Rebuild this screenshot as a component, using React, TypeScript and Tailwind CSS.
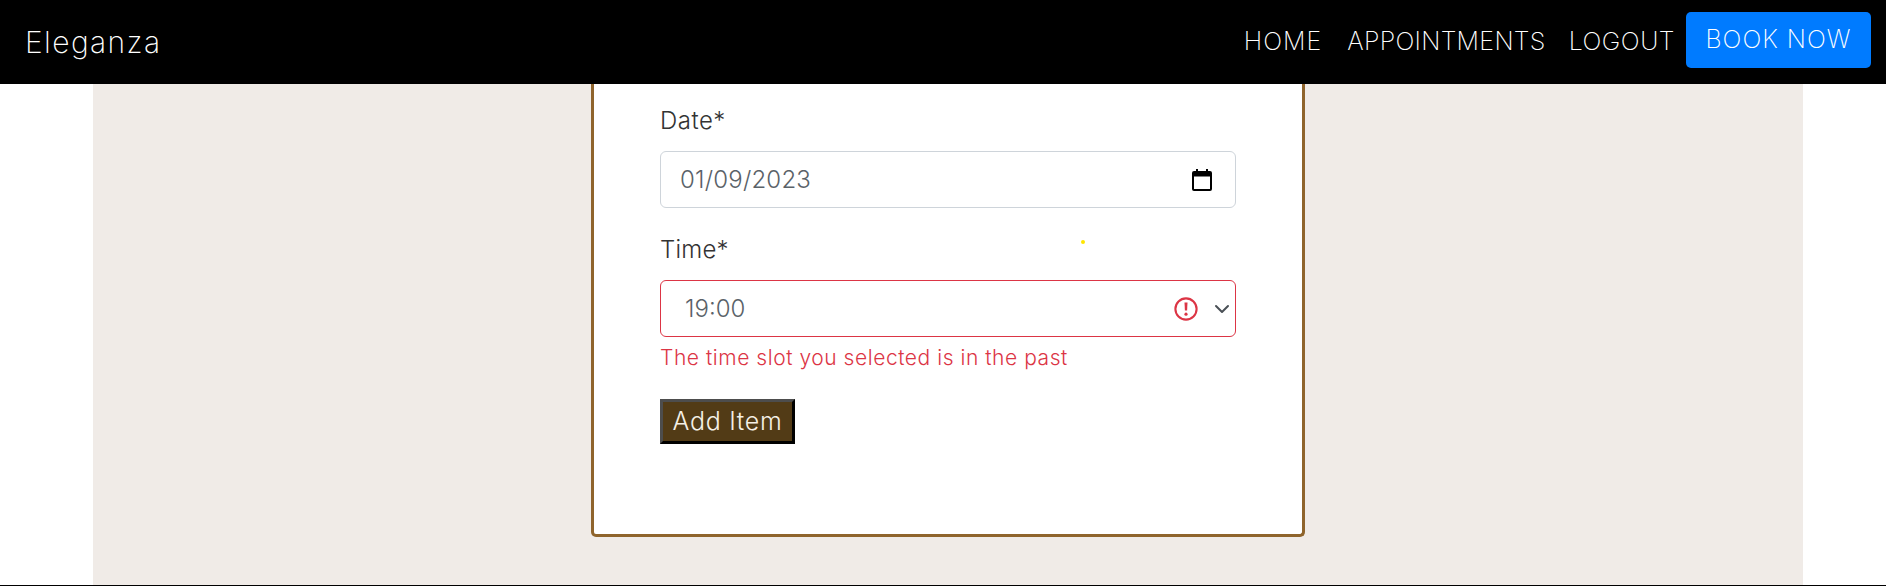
import { useRef } from "react";

function CalendarIcon() {
  return (
    <svg width="20" height="22" viewBox="0 0 20 22" className="shrink-0">
      <path
        d="M4 0h2v2h8V0h2v2h2a2 2 0 0 1 2 2v16a2 2 0 0 1-2 2H2a2 2 0 0 1-2-2V4a2 2 0 0 1 2-2h2V0zM2 7.500V20h16V7.500H2z"
        fill="#000"
      />
    </svg>
  );
}

function InvalidIcon() {
  return (
    <svg width="24" height="24" viewBox="0 0 12 12" className="shrink-0">
      <circle cx="6" cy="6" r="5.300" fill="none" stroke="#dc3545" strokeWidth="1.050" />
      <path d="M5.250 2.800h1.500l-.2 4h-1.100z" fill="#dc3545" />
      <circle cx="6" cy="8.600" r="0.800" fill="#dc3545" />
    </svg>
  );
}

function ChevronIcon() {
  return (
    <svg width="16" height="16" viewBox="0 0 16 16" className="shrink-0">
      <path d="M2 5l6 6 6-6" fill="none" stroke="#4a5056" strokeWidth="2" strokeLinecap="round" strokeLinejoin="round" />
    </svg>
  );
}

export default function App() {
  const ref = useRef<HTMLFormElement>(null);

  return (
    <div className="flex h-[586px] flex-col overflow-hidden bg-white font-['Inter',sans-serif] font-light">
      <header className="flex h-[84px] shrink-0 items-center justify-between bg-black pl-[25px] pr-[15px] text-white">
        <a className="text-[30px] font-[250] tracking-[1.4px]">Eleganza</a>
        <nav className="flex items-center font-[250]">
          <a className="mr-[25px] text-[25px] tracking-[1px]">HOME</a>
          <a className="mr-[23px] text-[25px] tracking-[0.3px]">APPOINTMENTS</a>
          <a className="mr-[11px] text-[25px] tracking-[0.5px]">LOGOUT</a>
          <a className="mb-[4px] flex h-[56px] w-[185px] items-center justify-center rounded-[5px] bg-[#007bff] text-[25px] tracking-[1px]">
            BOOK NOW
          </a>
        </nav>
      </header>

      <main className="ml-[93px] mr-[83px] flex flex-1 justify-center bg-[#f0ebe7]">
        <div className="h-[453px] w-[714px]">
          <form
            ref={ref}
            className="relative flex h-full flex-col rounded-b-[5px] border-x-[3px] border-b-[3px] border-[#8f642c] bg-white pl-[66px] pr-[66px] pt-[19px]"
          >
            <label className="mb-[12px] h-[36px] text-[24px] leading-[36px] tracking-[0.5px] text-[#333]">Date*</label>
            <div className="flex h-[57px] items-center justify-between rounded-[6px] border border-[#ced4da] pl-[19px] pr-[23px] text-[24px] tracking-[0.2px] text-[#5a6268]">
              <span>01/09/2023</span>
              <CalendarIcon />
            </div>

            <label className="mb-[12px] mt-[24px] h-[36px] text-[24px] leading-[36px] tracking-[0.2px] text-[#333]">Time*</label>
            <div className="flex h-[57px] items-center rounded-[6px] border border-[#dc3545] pl-[24px] pr-[5px] text-[24px] text-[#5a6268]">
              <span className="flex-1">19:00</span>
              <InvalidIcon />
              <span className="ml-[16px]">
                <ChevronIcon />
              </span>
            </div>
            <p className="mt-[6px] h-[30px] text-[21px] leading-[30px] tracking-[0.55px] text-[#dc3545]">
              The time slot you selected is in the past
            </p>

            <div className="mt-[26px]">
              <button
                type="button"
                className="h-[45px] w-[135px] border-[3px] border-b-black border-l-[#4d4d4d] border-r-black border-t-[#4d4d4d] bg-[#523b16] text-[25px] tracking-[0.7px] text-[#f5f0e6]"
              >
                Add Item
              </button>
            </div>

            <span className="absolute left-[487px] top-[156px] size-[4px] rounded-full bg-[#ffe600]" />
          </form>
        </div>
      </main>

      <div className="h-px shrink-0 bg-black" />
    </div>
  );
}
